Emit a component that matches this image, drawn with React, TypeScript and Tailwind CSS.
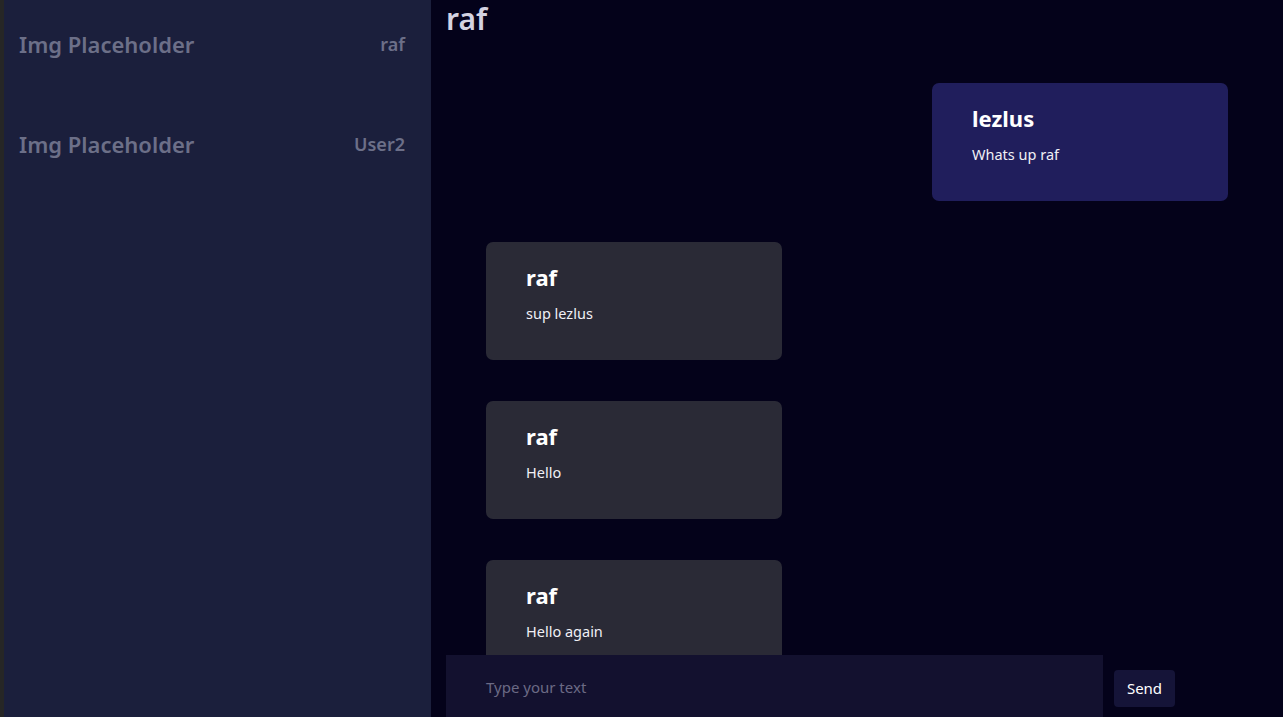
import React from "react";

const font = { fontFamily: '"Noto Sans", "Open Sans", sans-serif' };

function Card({ name, text, mine }: { name: string; text: string; mine?: boolean }) {
  return (
    <div
      className={`w-[296px] h-[118px] shrink-0 rounded-[7px] px-[40px] pt-[19px] ${
        mine ? "bg-[#201e5c] self-end" : "bg-[#2a2a36] self-start"
      }`}
    >
      <div className="text-[22px] leading-[32px] font-bold text-white">{name}</div>
      <div className="mt-[8px] text-[14.5px] leading-[24px] text-[#f0f0f5]">{text}</div>
    </div>
  );
}

export default function App() {
  return (
    <div className="w-[1283px] h-[717px] overflow-hidden flex bg-[#252525]" style={font}>
      <div className="w-[4px] shrink-0 bg-[#262626]" />
      <aside className="w-[427px] shrink-0 bg-[#1b1f3c] flex flex-col pt-[28px] gap-[68px] pl-[15px] pr-[26px]">
        <div className="flex items-center justify-between h-[32px] text-[#6c6f88] font-semibold">
          <span className="text-[22px]">Img Placeholder</span>
          <span className="text-[18px]">raf</span>
        </div>
        <div className="flex items-center justify-between h-[32px] text-[#6c6f88] font-semibold">
          <span className="text-[22px]">Img Placeholder</span>
          <span className="text-[18px]">User2</span>
        </div>
      </aside>
      <main className="relative flex-1 bg-[#04021a] px-[15px] overflow-hidden">
        <h1 className="text-[30px] leading-[38px] font-semibold text-[#d4d3e2]">raf</h1>
        <div className="flex flex-col gap-[41px] px-[40px] mt-[45px]">
          <Card name="lezlus" text="Whats up raf" mine />
          <Card name="raf" text="sup lezlus" />
          <Card name="raf" text="Hello" />
          <Card name="raf" text="Hello again" />
        </div>
        <div className="absolute left-[15px] right-[15px] top-[655px] flex items-start gap-[11px]">
          <div className="w-[657px] h-[70px] bg-[#13112f] flex items-start pl-[40px] pt-[20px]">
            <span className="text-[15px] leading-[24px] text-[#6b6a85]">Type your text</span>
          </div>
          <button className="mt-[15px] w-[61px] h-[37px] rounded-[4px] bg-[#151438] text-white text-[15px]">
            Send
          </button>
        </div>
      </main>
    </div>
  );
}
